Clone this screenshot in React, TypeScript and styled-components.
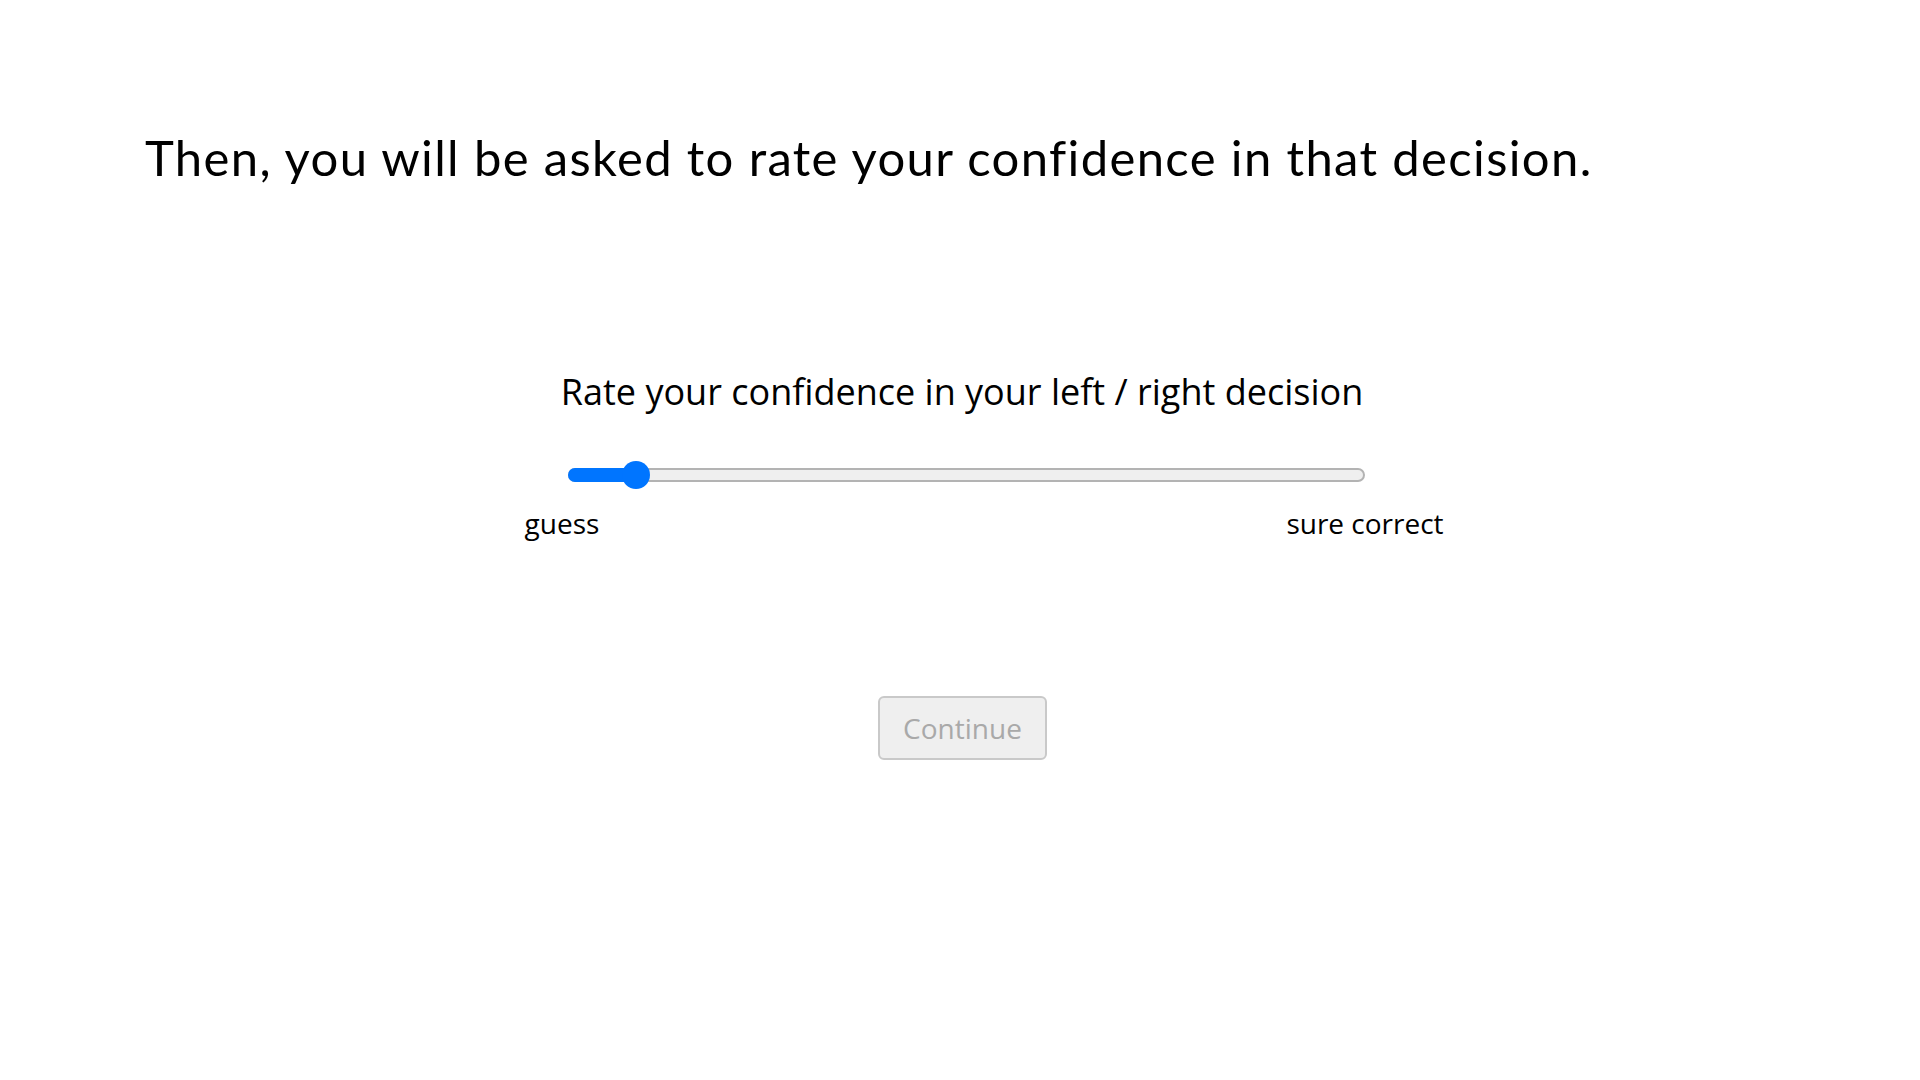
import React from 'react';
import styled, { createGlobalStyle } from 'styled-components';

const GlobalStyle = createGlobalStyle`
  html, body {
    margin: 0;
    padding: 0;
    background: #ffffff;
  }
  body {
    font-family: "Open Sans", "Noto Sans", sans-serif;
    color: #000000;
  }
`;

const THUMB = 28;

const Page = styled.div`
  width: 1920px;
  min-height: 1080px;
  box-sizing: border-box;
  padding-top: 128px;
`;

const Heading = styled.h1`
  margin: 0 0 0 145px;
  font-family: Lato, "Open Sans", sans-serif;
  font-size: 49px;
  font-weight: 400;
  letter-spacing: 1.35px;
  line-height: normal;
  color: #000;
`;

const Panel = styled.div`
  display: flex;
  flex-direction: column;
  align-items: center;
  margin-top: 184px;
`;

const Prompt = styled.p`
  margin: 0 0 0 4px;
  font-size: 36px;
  line-height: 1.2;
`;

const SliderBlock = styled.div`
  width: 797px;
  margin: 48px 0 0 13px;
`;

const Track = styled.div`
  position: relative;
  height: ${THUMB}px;
  display: flex;
  align-items: center;
`;

const Rail = styled.div`
  width: 100%;
  height: 14px;
  box-sizing: border-box;
  border: 2px solid #b3b3b3;
  border-radius: 7px;
  background: #efefef;
`;

const Fill = styled.div`
  position: absolute;
  left: 0;
  top: 7px;
  height: 14px;
  border-radius: 7px 0 0 7px;
  background: #0075ff;
`;

const Thumb = styled.div`
  position: absolute;
  top: 0;
  width: ${THUMB}px;
  height: ${THUMB}px;
  margin-left: -${THUMB / 2}px;
  border-radius: 50%;
  background: #0075ff;
`;

const Labels = styled.div`
  display: flex;
  justify-content: space-between;
  margin-top: 15px;
`;

const EndLabel = styled.span<{ $nudge?: number }>`
  width: 0;
  display: flex;
  justify-content: center;
  margin-left: ${p => p.$nudge ?? 0}px;
  white-space: nowrap;
  font-size: 28px;
  line-height: normal;
`;

const ContinueButton = styled.button`
  margin: 154px 0 0 5px;
  padding: 11px 23px;
  font-family: "Open Sans", "Noto Sans", sans-serif;
  font-size: 28px;
  line-height: normal;
  color: #a9a9a9;
  background: #efefef;
  border: 2px solid #c9c9c9;
  border-radius: 6px;
  cursor: default;
`;

interface ConfidenceSliderProps {
  value: number;
  width: number;
}

const ConfidenceSlider: React.FC<ConfidenceSliderProps> = ({ value, width }) => {
  const center = THUMB / 2 + (value / 100) * (width - THUMB);
  return (
    <SliderBlock>
      <Track>
        <Rail />
        <Fill style={{ width: center }} />
        <Thumb style={{ left: center }} />
      </Track>
      <Labels>
        <EndLabel $nudge={-6}>guess</EndLabel>
        <EndLabel>sure correct</EndLabel>
      </Labels>
    </SliderBlock>
  );
};

export default function App() {
  return (
    <Page>
      <GlobalStyle />
      <Heading>Then, you will be asked to rate your confidence in that decision.</Heading>
      <Panel>
        <Prompt>Rate your confidence in your left / right decision</Prompt>
        <ConfidenceSlider value={7} width={797} />
        <ContinueButton disabled>Continue</ContinueButton>
      </Panel>
    </Page>
  );
}
